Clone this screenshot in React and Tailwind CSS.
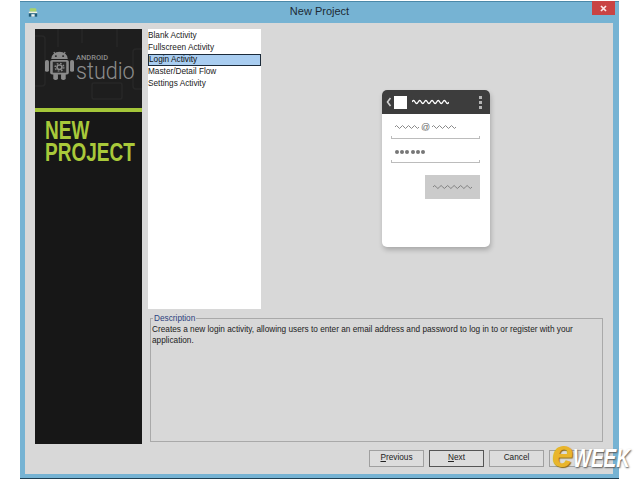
const sans = "font-['Liberation_Sans',Arial,sans-serif]";

function Squiggle({ width, color, strokeWidth = 1, cycles }) {
  const step = width / cycles;
  let d = "M0 3";
  for (let i = 0; i < cycles; i++) {
    d += ` Q${i * step + step / 4} 0 ${i * step + step / 2} 3 T${(i + 1) * step} 3`;
  }
  return (
    <svg width={width} height="6" viewBox={`0 0 ${width} 6`} className="block shrink-0">
      <path d={d} fill="none" stroke={color} strokeWidth={strokeWidth} />
    </svg>
  );
}

function Underline() {
  return <div className="h-[3px] border-b border-x border-[#bcbcbc]" />;
}

function AndroidLogo() {
  return (
    <svg width="29" height="31" viewBox="0 0 28 34" preserveAspectRatio="none" className="block shrink-0">
      <g fill="#8a8a8a">
        <path d="M6 11a8 8 0 0 1 16 0z" />
        <rect x="0" y="12" width="3.8" height="13" rx="1.8" />
        <rect x="24.2" y="12" width="3.8" height="13" rx="1.8" />
        <rect x="5" y="12" width="18" height="16" rx="2" />
        <rect x="8" y="26" width="4.5" height="8" rx="2" />
        <rect x="15.5" y="26" width="4.5" height="8" rx="2" />
        <path d="M8 3.5 9 3l2 3-1 .5zM20 3.5 19 3l-2 3 1 .5z" />
      </g>
      <circle cx="10.5" cy="7.8" r="1" fill="#222" />
      <circle cx="17.5" cy="7.8" r="1" fill="#222" />
      <rect x="7.5" y="14" width="13" height="12" fill="#2a2a2a" />
      <circle cx="14" cy="20" r="2.4" fill="none" stroke="#8a8a8a" strokeWidth="1.6" />
      <circle cx="14" cy="20" r="4.2" fill="none" stroke="#8a8a8a" strokeWidth="1.4" strokeDasharray="1.6 1.7" />
    </svg>
  );
}

function Sidebar() {
  return (
    <aside className="w-[107px] h-[415px] bg-[#171717] flex flex-col shrink-0">
      <div className="relative h-[79px] bg-[#1e1e1e] overflow-hidden">
        <svg width="107" height="79" viewBox="0 0 107 79" className="absolute inset-0 block">
          <g fill="none" stroke="#272727" strokeWidth="1.5">
            <rect x="-3" y="7" width="13" height="50" rx="3" />
            <rect x="57" y="54" width="30" height="16" rx="2" />
            <rect x="98" y="20" width="14" height="40" rx="3" />
            <path d="M23 0v18M47 0v14M82 0v18" />
          </g>
        </svg>
        <div className="relative flex items-start gap-[2px] pl-[10px] pt-[20px]">
          <AndroidLogo />
          <div className="flex flex-col text-[#8c8c8c] font-['Roboto',sans-serif] whitespace-nowrap">
            <span className="text-[7.5px] leading-[7px] font-medium mt-[5px]">ANDROID</span>
            <span className="text-[24px] leading-[20px] font-light w-[58px] origin-left scale-x-[0.9]">studio</span>
          </div>
        </div>
      </div>
      <div className="h-[4px] bg-[#a4c639]" />
      <div className={`pl-[10px] pt-[7px] text-[#a9c93a] font-bold text-[25px] leading-[22px] whitespace-nowrap ${sans}`}>
        <div className="w-[44px] origin-left scale-x-[0.76]">NEW</div>
        <div className="w-[89px] origin-left scale-x-[0.76]">PROJECT</div>
      </div>
    </aside>
  );
}

function TemplateList() {
  const items = ["Blank Activity", "Fullscreen Activity", "Login Activity", "Master/Detail Flow", "Settings Activity"];
  return (
    <div className={`w-[113px] h-[280px] bg-white shrink-0 pt-[1px] text-[8.25px] text-[#222] ${sans}`}>
      {items.map((t) =>
        t === "Login Activity" ? (
          <div key={t} className="h-[12px] leading-[10px] bg-[#a9cdf0] border border-[#1c2b3a] text-[#111]">{t}</div>
        ) : (
          <div key={t} className="h-[12px] leading-[12px]">{t}</div>
        )
      )}
    </div>
  );
}

function PhonePreview() {
  return (
    <div className="w-[108px] h-[157px] bg-white rounded-[5px] shadow-[1px_3px_5px_rgba(0,0,0,0.22)] overflow-hidden flex flex-col">
      <div className="h-[24px] bg-[#3d3d3d] flex items-center pl-[4px] pr-[8px]">
        <svg width="6" height="10" viewBox="0 0 6 10" className="block">
          <path d="M4.5 1 1.5 5l3 4" fill="none" stroke="#cfcfcf" strokeWidth="1.6" />
        </svg>
        <div className="w-[13px] h-[13px] bg-white ml-[2px]" />
        <div className="ml-[5px]"><Squiggle width={37} color="#ffffff" strokeWidth={1.3} cycles={6} /></div>
        <div className="ml-auto flex flex-col gap-[2px]">
          <div className="w-[3px] h-[3px] bg-[#b5b5b5]" />
          <div className="w-[3px] h-[3px] bg-[#b5b5b5]" />
          <div className="w-[3px] h-[3px] bg-[#b5b5b5]" />
        </div>
      </div>
      <div className="pl-[9px] pr-[10px] pt-[8px] flex flex-col">
        <div className="flex items-center pl-[4px] h-[10px] gap-[2px]">
          <Squiggle width={24} color="#8a8a8a" cycles={4} />
          <span className={`text-[9px] leading-[9px] text-[#666] ${sans}`}>@</span>
          <Squiggle width={24} color="#8a8a8a" cycles={4} />
        </div>
        <div className="mt-[4px]"><Underline /></div>
        <div className="flex gap-[1.2px] pl-[4px] mt-[10px] h-[5px] items-center">
          {[0, 1, 2, 3, 4, 5].map((i) => (
            <div key={i} className="w-[4px] h-[4px] rounded-full bg-[#777]" />
          ))}
        </div>
        <div className="mt-[6px]"><Underline /></div>
        <div className="self-end mt-[12px] w-[55px] h-[24px] bg-[#cbcbcb] flex items-center justify-center">
          <Squiggle width={39} color="#808080" cycles={6} />
        </div>
      </div>
    </div>
  );
}

function Description() {
  return (
    <fieldset className={`h-[129px] mt-[4px] ml-[2px] w-[453px] border border-[#a9a9a9] px-[1px] ${sans} text-[8.25px] leading-[11px] text-[#222]`}>
      <legend className="ml-[1px] px-[1px] text-[#2b3f7e]">Description</legend>
      <p className="w-[440px]">
        Creates a new login activity, allowing users to enter an email address and password to log in to or register with your application.
      </p>
    </fieldset>
  );
}

function Button({ children, primary }) {
  return (
    <button className={`w-[55px] h-[17px] bg-[#dcdcdc] text-[8.25px] text-[#222] ${sans} border ${primary ? "border-[#555]" : "border-[#a0a0a0]"}`}>
      {children}
    </button>
  );
}

export default function App() {
  return (
    <div className="relative w-[640px] h-[480px] bg-white overflow-hidden pt-[1px] pl-[20px]">
      <div className="w-[599px] h-[478px] bg-[#76b3d3] flex flex-col border-t border-b border-t-[#4b88a8] border-b-[#1f3f52]">
        <div className="h-[21px] grid grid-cols-[1fr_auto_1fr] items-center shrink-0">
          <svg width="10" height="11" viewBox="0 0 12 12" className="block ml-[8px]">
            <rect x="2" y="1" width="8" height="4" rx="1.5" fill="#a9d36a" />
            <rect x="1" y="5" width="10" height="2" fill="#f2f2e0" />
            <rect x="1" y="7" width="10" height="4" fill="#1f5c78" />
            <rect x="4" y="8" width="4" height="3" fill="#e8f0f0" />
          </svg>
          <span className={`text-[11px] leading-[13px] pb-[2px] text-[#1d2a33] ${sans}`}>New Project</span>
          <div className="justify-self-end self-start mr-[4px] -mt-[1px] w-[23px] h-[14px] bg-[#c94343] flex items-center justify-center">
            <svg width="7" height="7" viewBox="0 0 7 7" className="block">
              <path d="M1 1l5 5M6 1 1 6" stroke="#fbe6e6" strokeWidth="1.7" />
            </svg>
          </div>
        </div>
        <div className="ml-[5px] w-[588px] h-[451px] bg-[#d8d8d8] flex flex-col">
          <div className="flex h-[421px] pl-[10px] pt-[6px]">
            <Sidebar />
            <div className="ml-[6px] flex flex-col w-[455px]">
              <div className="flex h-[280px]">
                <TemplateList />
                <div className="flex-1 pt-[61px] pl-[121px]">
                  <PhonePreview />
                </div>
              </div>
              <Description />
            </div>
          </div>
          <div className="flex gap-[5px] pl-[344px] pt-[6px]">
            <Button><span className="underline">P</span>revious</Button>
            <Button primary><span className="underline">N</span>ext</Button>
            <Button>Cancel</Button>
            <Button />
          </div>
        </div>
      </div>
      <div className={`absolute left-[552px] top-[436px] w-[81px] h-[36px] flex items-baseline italic font-bold leading-[36px] whitespace-nowrap ${sans}`}>
        <span className="text-[38px] text-[#e9b52c] [text-shadow:1px_1px_1px_#8a6a18]">e</span>
        <span className="text-[25px] w-[57px] origin-left scale-x-[0.76] text-white [text-shadow:1px_1px_2px_#555]">WEEK</span>
      </div>
    </div>
  );
}
